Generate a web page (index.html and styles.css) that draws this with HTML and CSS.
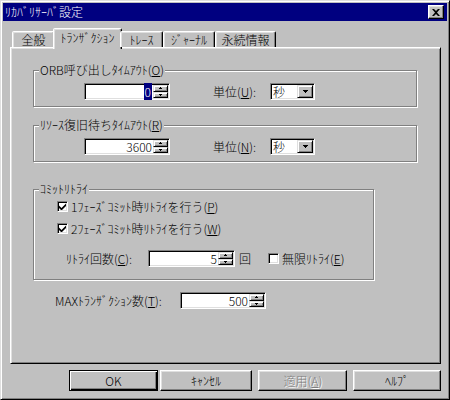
FILE: index.html
```html
<!DOCTYPE html>
<html lang="ja">
<head>
    <meta charset="UTF-8">
    <title>ﾘｶﾊﾞﾘｻｰﾊﾞ設定</title>
    <link rel="stylesheet" href="styles.css">
</head>
<body>
    <div class="window">
        <div class="titlebar">
            <span class="title">ﾘｶﾊﾞﾘｻｰﾊﾞ設定</span>
            <span class="close-btn">
                <svg width="8" height="7" viewBox="0 0 8 7"><path d="M0 0h2l2 2 2-2h2L5 3.5 8 7H6L4 5 2 7H0l3-3.5z"/></svg>
            </span>
        </div>

        <div class="dialog">
            <div class="tabs">
                <div class="tab tab-general">全般</div>
                <div class="tab tab-active">ﾄﾗﾝｻﾞｸｼｮﾝ</div>
                <div class="tab tab-trace">ﾄﾚｰｽ</div>
                <div class="tab tab-journal">ｼﾞｬｰﾅﾙ</div>
                <div class="tab tab-persist">永続情報</div>
            </div>

            <div class="panel">
                <!-- ORB呼び出し -->
                <div class="group group-wide">
                    <div class="group-title">ORB呼び出しﾀｲﾑｱｳﾄ(<u>O</u>)</div>
                    <div class="group-row">
                        <div class="spin">
                            <div class="spin-value"><span class="sel">0</span></div>
                            <div class="spin-btns">
                                <div class="spin-btn"><svg width="3" height="2"><rect x="1" y="0" width="1" height="1"/><rect x="0" y="1" width="3" height="1"/></svg></div>
                                <div class="spin-btn"><svg width="3" height="2"><rect x="0" y="0" width="3" height="1"/><rect x="1" y="1" width="1" height="1"/></svg></div>
                            </div>
                        </div>
                        <span class="unit-label">単位(<u>U</u>):</span>
                        <div class="combo">
                            <span class="combo-text">秒</span>
                            <span class="combo-btn"><svg width="5" height="3"><rect x="0" y="0" width="5" height="1"/><rect x="1" y="1" width="3" height="1"/><rect x="2" y="2" width="1" height="1"/></svg></span>
                        </div>
                    </div>
                </div>

                <!-- リソース復旧 -->
                <div class="group group-wide group-restore">
                    <div class="group-title">ﾘｿｰｽ復旧待ちﾀｲﾑｱｳﾄ(<u>R</u>)</div>
                    <div class="group-row">
                        <div class="spin">
                            <div class="spin-value">3600</div>
                            <div class="spin-btns">
                                <div class="spin-btn"><svg width="3" height="2"><rect x="1" y="0" width="1" height="1"/><rect x="0" y="1" width="3" height="1"/></svg></div>
                                <div class="spin-btn"><svg width="3" height="2"><rect x="0" y="0" width="3" height="1"/><rect x="1" y="1" width="1" height="1"/></svg></div>
                            </div>
                        </div>
                        <span class="unit-label">単位(<u>N</u>):</span>
                        <div class="combo">
                            <span class="combo-text">秒</span>
                            <span class="combo-btn"><svg width="5" height="3"><rect x="0" y="0" width="5" height="1"/><rect x="1" y="1" width="3" height="1"/><rect x="2" y="2" width="1" height="1"/></svg></span>
                        </div>
                    </div>
                </div>

                <!-- コミットリトライ -->
                <div class="group group-commit">
                    <div class="group-title">ｺﾐｯﾄﾘﾄﾗｲ</div>
                    <div class="check-row check-first">
                        <span class="checkbox"><svg width="7" height="7"><polygon points="0,2.5 2.5,5 7,0.5 7,3 2.5,7.5 0,5"/></svg></span>
                        <span class="check-label">1ﾌｪｰｽﾞｺﾐｯﾄ時ﾘﾄﾗｲを行う(<u>P</u>)</span>
                    </div>
                    <div class="check-row check-second">
                        <span class="checkbox"><svg width="7" height="7"><polygon points="0,2.5 2.5,5 7,0.5 7,3 2.5,7.5 0,5"/></svg></span>
                        <span class="check-label">2ﾌｪｰｽﾞｺﾐｯﾄ時ﾘﾄﾗｲを行う(<u>W</u>)</span>
                    </div>
                    <div class="retry-row">
                        <span class="retry-label">ﾘﾄﾗｲ回数(<u>C</u>):</span>
                        <div class="spin spin-retry">
                            <div class="spin-value">5</div>
                            <div class="spin-btns">
                                <div class="spin-btn"><svg width="3" height="2"><rect x="1" y="0" width="1" height="1"/><rect x="0" y="1" width="3" height="1"/></svg></div>
                                <div class="spin-btn"><svg width="3" height="2"><rect x="0" y="0" width="3" height="1"/><rect x="1" y="1" width="1" height="1"/></svg></div>
                            </div>
                        </div>
                        <span class="times">回</span>
                        <span class="checkbox checkbox-unlimited"></span>
                        <span class="check-label">無限ﾘﾄﾗｲ(<u>E</u>)</span>
                    </div>
                </div>

                <div class="max-row">
                    <span class="max-label">MAXﾄﾗﾝｻﾞｸｼｮﾝ数(<u>T</u>):</span>
                    <div class="spin">
                        <div class="spin-value">500</div>
                        <div class="spin-btns">
                            <div class="spin-btn"><svg width="3" height="2"><rect x="1" y="0" width="1" height="1"/><rect x="0" y="1" width="3" height="1"/></svg></div>
                            <div class="spin-btn"><svg width="3" height="2"><rect x="0" y="0" width="3" height="1"/><rect x="1" y="1" width="1" height="1"/></svg></div>
                        </div>
                    </div>
                </div>
            </div>

            <div class="buttons">
                <div class="btn btn-default">OK</div>
                <div class="btn btn-cancel">ｷｬﾝｾﾙ</div>
                <div class="btn btn-apply btn-disabled">適用(<u>A</u>)</div>
                <div class="btn btn-help">ﾍﾙﾌﾟ</div>
            </div>
        </div>
    </div>
</body>
</html>
```

FILE: styles.css
```css
body {
    margin: 0;
    font-family: "Noto Sans CJK JP", "Noto Sans", sans-serif;
    font-size: 12px;
    font-weight: 300;
    line-height: 14px;
    color: #000;
    background-color: #c0c0c0;
}

.window {
    width: 450px;
    height: 400px;
    box-sizing: border-box;
    background-color: #c0c0c0;
    border: 1px solid;
    border-color: #dfdfdf #000 #000 #dfdfdf;
    box-shadow: inset 1px 1px #fff, inset -1px -1px #808080;
    padding: 2px;
    display: flex;
    flex-direction: column;
}

.titlebar {
    height: 18px;
    background-color: #000080;
    color: #fff;
    display: flex;
    align-items: center;
    justify-content: space-between;
    padding: 0 3px 0 2px;
}

.close-btn {
    width: 16px;
    height: 14px;
    box-sizing: border-box;
    background-color: #c0c0c0;
    border: 1px solid;
    border-color: #fff #000 #000 #fff;
    box-shadow: inset -1px -1px #808080, inset 1px 1px #dfdfdf;
    display: flex;
    align-items: center;
    justify-content: center;
}

.dialog {
    flex: 1;
    display: flex;
    flex-direction: column;
    padding: 7px 6px 0 7px;
}

/* tabs */
.tabs {
    display: flex;
    align-items: flex-end;
    height: 19px;
    padding-left: 2px;
    z-index: 1;
}

.tab {
    height: 16px;
    box-sizing: border-box;
    background-color: #c0c0c0;
    border: 1px solid;
    border-bottom: none;
    border-color: #fff #000 transparent #fff;
    border-radius: 2px 2px 0 0;
    box-shadow: inset -1px 0 #808080, inset 1px 1px #dfdfdf;
    display: flex;
    align-items: center;
    justify-content: center;
}

.tab-general { width: 43px; }
.tab-trace { width: 43px; }
.tab-journal { width: 52px; }
.tab-persist { width: 61px; }

.tab-active {
    width: 69px;
    height: 21px;
    margin: 0 -2px -2px -2px;
    padding-bottom: 2px;
}

.panel {
    height: 317px;
    box-sizing: border-box;
    border: 1px solid;
    border-color: #fff #000 #000 #fff;
    box-shadow: inset 1px 1px #dfdfdf, inset -1px -1px #808080;
    padding: 22px 0 0 22px;
}

/* group boxes */
.group {
    box-sizing: border-box;
    border: 1px solid #808080;
    box-shadow: inset 1px 1px #fff, 1px 1px #fff;
    display: flex;
    flex-direction: column;
    align-items: flex-start;
}

.group-wide {
    width: 384px;
    height: 37px;
}

.group-restore {
    margin-top: 18px;
}

.group-commit {
    width: 341px;
    height: 91px;
    margin-top: 27px;
}

.group-title {
    margin: -8px 0 0 5px;
    padding: 0 1px;
    background-color: #c0c0c0;
}

.group-row {
    display: flex;
    align-items: center;
    margin: 6px 0 0 50px;
}

.unit-label {
    width: 57px;
    margin-left: 43px;
}

/* sunken fields */
.spin,
.combo,
.checkbox {
    box-sizing: border-box;
    background-color: #fff;
    border: 1px solid;
    border-color: #808080 #fff #fff #808080;
    box-shadow: inset 1px 1px #000, inset -1px -1px #dfdfdf;
}

.spin {
    width: 86px;
    height: 17px;
    padding: 1px;
    display: flex;
}

.spin-retry {
    width: 87px;
}

.spin-value {
    flex: 1;
    text-align: right;
    padding-right: 1px;
    line-height: 13px;
}

.sel {
    background-color: #000080;
    color: #fff;
    padding: 0 1px;
}

.spin-btns {
    width: 15px;
    display: flex;
    flex-direction: column;
}

.spin-btn,
.combo-btn {
    box-sizing: border-box;
    background-color: #c0c0c0;
    border: 1px solid;
    border-color: #dfdfdf #000 #000 #dfdfdf;
    box-shadow: inset 1px 1px #fff, inset -1px -1px #808080;
    display: flex;
    align-items: center;
    justify-content: center;
}

.spin-btn {
    flex: 1;
}

.combo {
    width: 45px;
    height: 17px;
    padding: 1px;
    display: flex;
}

.combo-text {
    flex: 1;
    padding-left: 1px;
    line-height: 13px;
}

.combo-btn {
    width: 16px;
}

/* checkboxes */
.checkbox {
    width: 11px;
    height: 11px;
    display: flex;
    align-items: center;
    justify-content: center;
    flex-shrink: 0;
}

.check-row {
    display: flex;
    align-items: center;
    height: 11px;
    margin-left: 23px;
}

.check-first { margin-top: 5px; }
.check-second { margin-top: 11px; }

.check-label {
    margin-left: 3px;
}

.retry-row {
    display: flex;
    align-items: center;
    margin: 16px 0 0 32px;
}

.retry-label {
    width: 82px;
}

.times {
    margin-left: 4px;
}

.checkbox-unlimited {
    margin-left: 17px;
}

.max-row {
    display: flex;
    align-items: center;
    margin: 12px 0 0 22px;
}

.max-label {
    width: 125px;
}

/* bottom buttons */
.buttons {
    display: flex;
    margin-top: 6px;
    padding-left: 59px;
}

.btn {
    height: 21px;
    box-sizing: border-box;
    border: 1px solid;
    border-color: #fff #000 #000 #fff;
    box-shadow: inset -1px -1px #808080, inset 1px 1px #dfdfdf;
    display: flex;
    align-items: center;
    justify-content: center;
}

.btn-default {
    width: 89px;
    border-color: #000;
    box-shadow: inset 1px 1px #fff, inset -1px -1px #000, inset -2px -2px #808080;
}

.btn-cancel {
    width: 93px;
    margin-left: 2px;
}

.btn-apply {
    width: 89px;
    margin-left: 6px;
}

.btn-help {
    width: 88px;
    margin-left: 6px;
}

.btn-disabled {
    color: #808080;
    text-shadow: 1px 1px #fff;
}
```
